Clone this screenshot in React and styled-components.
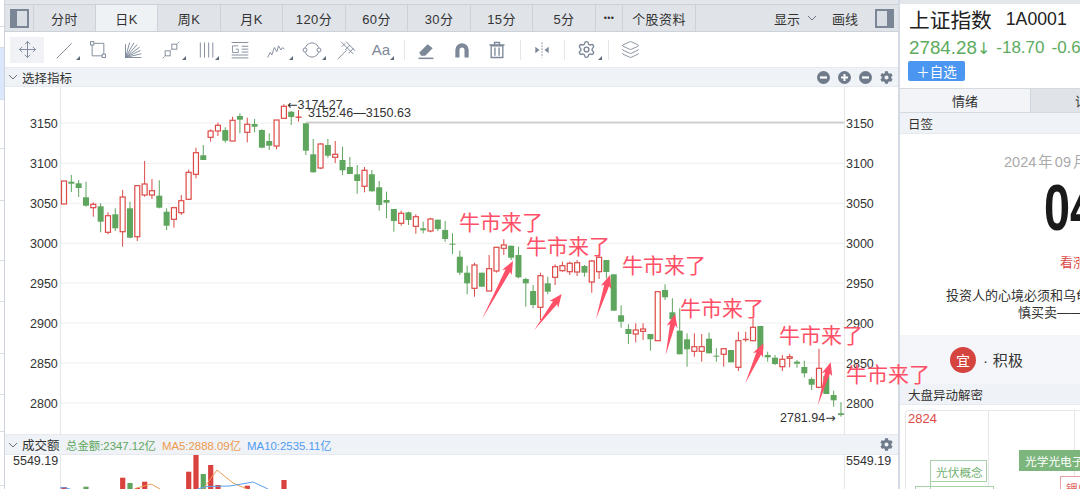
import React from 'react';
import styled, { createGlobalStyle } from 'styled-components';
import { Move, Layers, Settings } from 'lucide-react';
import { FaCog } from 'react-icons/fa';

const FONT = `"Liberation Sans", "Noto Sans CJK SC", sans-serif`;
const GREEN = '#5ea55e';
const RED = '#db4a46';
const ICON = '#7c8798';

const Global = createGlobalStyle`
  html, body { margin: 0; padding: 0; width: 1080px; height: 489px; overflow: hidden; background: #fff; }
  #root { width: 1080px; height: 489px; }
  * { box-sizing: border-box; }
`;

const Page = styled.div`
  display: flex; width: 1080px; height: 489px; overflow: hidden;
  font-family: ${FONT}; color: #333; background: #fff;
`;
const SideStrip = styled.div`
  width: 5px; flex: none; display: flex; flex-direction: column;
  border-right: 1px solid #ccd3dc;
`;
const SideRow = styled.div`
  height: ${p => p.$h}px; flex: none;
  background: ${p => p.$bg || '#fff'};
  border-bottom: 1px solid #d8dde3;
`;
const Main = styled.div`
  width: 893px; flex: none; display: flex; flex-direction: column;
  position: relative; z-index: 2;
`;
const TopGap = styled.div`height: 4px; flex: none; background: #e3e6ea;`;

const TabBar = styled.div`
  height: 28px; flex: none; display: flex; align-items: stretch;
  background: #e0e4e9; border-top: 1px solid #ccd2d9; border-bottom: 1px solid #ccd2d9;
`;
const PanelCell = styled.div`
  width: 28px; flex: none; display: flex; align-items: center; justify-content: center;
`;
const Tab = styled.div`
  width: ${p => p.$w}px; flex: none; display: flex; align-items: center; justify-content: center;
  font-size: ${p => p.$s || 13}px; letter-spacing: .4px; color: #333;
  background: ${p => (p.$active ? '#eff2f5' : 'transparent')};
  border-left: 1px solid #ccd2d9;
`;
const TabEnd = styled.div`
  flex: 1; display: flex; align-items: center; justify-content: flex-end;
  border-left: 1px solid #ccd2d9; padding-right: 4px; font-size: 13px; color: #333;
`;
const ShowLabel = styled.span`margin-right: 7px;`;
const DrawLabel = styled.span`margin: 0 17px 0 11px;`;
const Toggle = styled.div`
  width: 19px; height: 19px; border: 2px solid #7a8696; background: #d9dee4;
  display: flex; justify-content: ${p => (p.$right ? 'flex-end' : 'flex-start')};
`;
const ToggleFill = styled.div`width: 5px; background: #7a8696;`;

const Toolbar = styled.div`
  height: 35px; flex: none; display: flex; align-items: center; padding-left: 5px;
  background: #fff;
`;
const Tool = styled.div`
  width: ${p => p.$w}px; height: 26px; flex: none; position: relative;
  display: flex; align-items: center; justify-content: center;
  background: ${p => (p.$active ? '#f0f2f5' : 'transparent')};
`;
const Corner = styled.i`
  position: absolute; right: ${p => p.$r}px; bottom: 3px; width: 0; height: 0;
  border-left: 4px solid transparent; border-bottom: 4px solid #5f6b7b;
`;
const ToolSep = styled.div`
  width: 1px; height: 20px; flex: none; background: #e3e6ea; margin-left: ${p => p.$ml}px;
`;
const AaGlyph = styled.span`font-size: 15px; color: ${ICON};`;

const PaneHead = styled.div`
  height: ${p => p.$h}px; flex: none; display: flex; align-items: center;
  background: #eff2f6; border-top: 1px solid #e6e9ee; border-bottom: 1px solid #e6e9ee;
  padding: 0 5px 0 3px; font-size: 12.5px; color: #333;
`;
const Chevron = styled.svg`width: 10px; height: 10px; margin-right: 4px; flex: none;`;
const HeadTitle = styled.span`margin-right: 4px; width: 40px; flex: none;`;
const Metric = styled.span`font-size: 11.4px; color: ${p => p.$c}; margin-right: 6px; white-space: nowrap;`;
const HeadIcons = styled.div`
  margin-left: auto; display: flex; align-items: center; gap: 8px; padding-right: 0;
`;
const Round = styled.div`
  width: 13px; height: 13px; border-radius: 50%; background: #6f7b8b; color: #fff;
  display: flex; align-items: center; justify-content: center;
`;
const CogWrap = styled.div`display: flex; color: #6f7b8b; margin-right: 0;`;

const ChartBox = styled.div`height: ${p => p.$h}px; flex: none; position: relative;`;
const Svg = styled.svg`display: block; overflow: visible;`;
const AxisText = styled.text`font: 12.5px ${FONT}; fill: #333;`;
const Mark = styled.text`font: 12.5px ${FONT}; fill: #333;`;
const MarkArrow = styled.tspan`font-family: "DejaVu Sans", sans-serif;`;
const Anno = styled.text`
  font: 400 21px "Noto Sans CJK SC", sans-serif; fill: #ff5068;
`;

const Rule = styled.div`width: 2px; flex: none; background: #d3dae3;`;
const Right = styled.div`
  width: 180px; flex: none; display: flex; flex-direction: column; overflow: hidden;
  position: relative; z-index: 1;
`;
const InfoHead = styled.div`
  height: 88px; flex: none; padding: 1px 0 0 9px; background: #fff; border-top: 4px solid #e3e6ea;
  white-space: nowrap; overflow: hidden;
`;
const TitleRow = styled.div`display: flex; align-items: center; height: 32px; margin-top: -2px;`;
const Title = styled.span`font-size: 20.7px; color: #222; margin-right: 14px;`;
const Code = styled.span`font-size: 17.7px; color: #222;`;
const PriceRow = styled.div`display: flex; align-items: center; height: 22px; margin-top: 2px; color: #5cab5e;`;
const Price = styled.span`font-size: 18.8px;`;
const PriceArrow = styled.span`font: 16px "DejaVu Sans", sans-serif; margin-right: 6px;`;
const Change = styled.span`font-size: 17px; margin-right: 7px;`;
const AddBtn = styled.div`
  width: 57px; height: 20px; margin: 2px 0 0 -1px; border-radius: 2px; background: #4a96f0;
  color: #fff; font-size: 13.5px; display: flex; align-items: center; justify-content: center;
`;
const InfoTabs = styled.div`height: 25px; flex: none; display: flex;`;
const InfoTab = styled.div`
  width: ${p => p.$w}px; flex: none; font-size: 13px; color: #333;
  display: flex; align-items: center; padding-bottom: 1px;
  justify-content: ${p => (p.$clip ? 'flex-start' : 'center')};
  padding-left: ${p => (p.$clip ? 44 : 0)}px; overflow: hidden; white-space: nowrap;
  background: ${p => (p.$active ? '#f2f4f7' : '#e0e4e9')};
  border-top: 1px solid #d5dae0; border-bottom: 1px solid #d5dae0;
  border-right: ${p => (p.$active ? '1px solid #cfd5dc' : '0')};
`;
const SubHead = styled.div`
  height: ${p => p.$h}px; flex: none; background: #eff2f6; display: flex; align-items: center;
  padding-left: 8px; font-size: 12.5px; color: #333;
  border-bottom: 1px solid #e6e9ee;
`;
const Day = styled.div`height: 201px; flex: none; background: #fff; position: relative; white-space: nowrap;`;
const DayLine = styled.div`
  position: absolute; left: ${p => p.$x}px; top: ${p => p.$y}px;
  font-size: ${p => p.$s}px; line-height: 1; color: ${p => p.$c || '#333'};
`;
const DayDate = styled(DayLine)`word-spacing: -2px;`;
const DayNumber = styled(DayLine)`
  font-weight: 700; transform: scaleX(.72); transform-origin: left center;
`;
const LuckRow = styled.div`
  height: 49px; flex: none; background: #f4f6f9; display: flex; align-items: center; padding-left: 50px;
`;
const Stamp = styled.div`
  width: 26px; height: 26px; border-radius: 50%; background: #d6443f; color: #fff;
  display: flex; align-items: center; justify-content: center; font-size: 14px; margin-right: 7px;
`;
const Luck = styled.span`font-size: 15px; color: #333; letter-spacing: .3px;`;
const Map = styled.div`flex: 1; background: #fff; position: relative; padding: 5px 0 0 5px;`;
const MapFrame = styled.div`
  height: 90px; width: 200px; border: 1.5px solid #e8e8e8; border-radius: 3px;
  position: relative; display: flex;
`;
const MapCol = styled.div`width: ${p => p.$w}px; flex: none; border-right: 1px solid #e6e6e6;`;
const HighVal = styled.div`
  position: absolute; left: 2px; top: 1px; font-size: 13px; line-height: 14px; color: ${RED};
`;
const ConceptTag = styled.div`
  position: absolute; left: ${p => p.$x}px; top: ${p => p.$y}px; width: ${p => p.$w}px; height: ${p => p.$h}px;
  font-size: 11.7px; display: flex; align-items: center; padding-left: 5px; white-space: nowrap;
  color: ${p => (p.$fill ? '#fff' : p.$c)};
  background: ${p => (p.$fill ? '#7cb67c' : '#fff')};
  border: 1px solid ${p => (p.$fill ? '#7cb67c' : p.$b)};
`;
const TagLink = styled.div`
  position: absolute; left: 24px; top: 70px; width: 1px; height: 12px; background: #a8d0a8; z-index: 1;
`;

// type, wickTop, bodyTop, bodyBottom, wickBottom (page pixels)
const K = [
  ['r',181,181,204,204],['g',175,181.7,183.7,192],['g',180,183.3,188,197],['g',181.7,197.3,205.7,206.7],
  ['r',202.3,204.3,207.7,216.7],['g',203.3,206.3,221.7,232.3],['r',212.3,215.7,232.3,234.3],['g',208.3,214.3,228.3,231],
  ['r',190,197,231.7,246.7],['g',201.7,208.3,237.7,238.3],['r',185.7,185.7,236.7,241],['r',161,184,195,196.7],
  ['r',179,190.7,195,199],['g',180.3,195.7,207.7,208.3],['g',208.3,211.7,225.7,230],['r',206.7,207.7,219.3,227.7],
  ['r',195,200.7,212.7,215],['r',169.7,172.3,199.3,199.3],['r',147.7,152.7,174.3,178.3],['g',145,155.3,160,160],
  ['r',129.3,131,137.3,141.7],['r',122.7,125.3,131,136],['g',127.3,130,140.7,142.7],['r',116.7,120.3,141,141],
  ['g',113.3,116,119.7,133.3],['r',117.7,124.3,132.3,142.3],['g',119,124,126.7,132.3],['g',129.3,130,147.7,148.3],
  ['g',133.3,141,145.7,150],['r',120,120,146,149.3],['r',104.3,106.3,118.3,118.3],['g',111,111.7,117,125],
  ['x',110,116.7,117.7,121.7],['g',123.3,123.3,150.7,155],['g',139,154.3,172.3,172.7],['r',143.3,144,168,169],
  ['g',139,145,155.7,157.7],['r',141,154.3,157.3,163],['g',146.7,160,170.3,175],['g',157,167,174,174],
  ['g',165,174.3,181,193.7],['r',167,170.3,186.3,192.3],['g',170,174.3,191.3,191.7],['g',181,187.3,205,210.7],
  ['g',191.7,200,202.7,218.3],['g',209,209,221,231.7],['r',210.7,213.3,223.3,225.7],['g',211.7,212.3,220,225],
  ['r',214.3,216.7,226.3,233.7],['g',221.7,228.3,230.3,233.3],['r',217.7,219,231,232.3],['g',219.7,219.7,229,231],
  ['g',221,230,239,241.7],['g',233.3,243.7,244.3,254],['g',250.7,256.7,272.7,275],['g',265.7,272.7,283.3,294.3],
  ['r',262.7,265,288.3,296.7],['g',272.7,272.7,286.7,286.7],['r',255,268.7,291,291],['r',247,247.3,271,272.7],
  ['r',239.3,245,248.3,255],['g',245.7,245.7,257.7,260],['g',246.7,255,277.3,278.3],['g',277.7,279,283.3,306.7],
  ['g',285,291,305,308.3],['r',272.7,275.7,307.3,320],['g',276.7,283.3,291.7,294.3],['r',264.3,266.7,277.3,285],
  ['r',261.7,265.7,270.7,271.7],['r',261.7,263.3,271.7,275],['r',260,262.7,272,276],['g',265,266,272.7,276.7],
  ['r',260,261,282,292.7],['r',254,257.3,271.7,279],['g',260,260,272,278.3],['g',274.3,274.3,310.7,310.7],
  ['g',305.3,315.3,321.7,327.7],['g',324.3,329,334,344],['r',323.3,330,334,342.3],['r',323.3,329,331.3,340],
  ['g',334,334,339.3,350.7],['r',291.7,291.7,340.7,341],['g',284.3,290,297.3,300],['g',298.3,312.3,319.3,320],
  ['g',308.3,330.7,354.3,354.3],['g',333.3,339.3,349.3,366.7],['r',333.3,346.7,351.3,356.7],['r',334,346.7,351.3,361.7],
  ['g',332.7,338.7,353.3,353.3],['g',348.3,355.7,356.7,361.7],['r',348.3,348.7,354.3,366.7],['g',350,350,362.3,362.3],
  ['r',331.7,340.7,367.3,371],['x',331.7,339,340,341.7],['r',318.3,327.3,340.7,340.7],['g',326,326,349.3,350],
  ['g',351.7,355,357.3,361.7],['g',355,357.7,364,365],['r',355,359.3,366.7,371],['r',354,356.7,358.3,367.3],
  ['g',360,361.7,363.7,367.7],['g',360.7,367,373.3,377.3],['g',377.3,379,384.7,390],['r',348.7,368.3,387.3,388.3],
  ['g',376,376,394,394],['g',390.7,395,400.3,406.7],['g',402.3,413.3,415,416.7],
];
const kx = i => 64 + 7.33 * i;

const LEVELS = [[3150, 123], [3100, 163.3], [3050, 203.3], [3000, 243.3], [2950, 283], [2900, 323], [2850, 363], [2800, 403]];

const ANNOS = [[459, 230], [526, 254], [622, 273], [680, 316], [779, 343], [846, 382]];
const ARROWS = [
  [482, 319, 513, 261], [534.3, 330, 561.7, 294], [596, 319, 610, 275],
  [665.7, 355, 675, 314], [745.3, 383.3, 763.3, 343.3], [817.7, 405.7, 830.7, 362.3],
];
function arrowPoints([tx, ty, px, py]) {
  const L = Math.hypot(px - tx, py - ty);
  const dx = (px - tx) / L, dy = (py - ty) / L;
  const nx = -dy, ny = dx;
  const at = (back, side) => `${(px - dx * back + nx * side).toFixed(1)},${(py - dy * back + ny * side).toFixed(1)}`;
  return [`${tx},${ty}`, at(11, 2.6), at(13, 5.5), `${px},${py}`, at(13, -5.5), at(11, -2.6)].join(' ');
}

const VOL = [
  [64,487,'r'],[86,486.7,'g'],[122.7,477.7,'r'],[130,483,'g'],[137.3,488,'r'],[144.7,481.7,'r'],
  [188.7,471.7,'r'],[196,455,'r'],[203.3,474,'g'],[210.7,465,'r'],[218,485,'r'],[247.3,485.7,'r'],[284,480,'r'],
];

function Candle({ d, i }) {
  const [t, wt, bt, bb, wb] = d;
  const x = kx(i);
  const c = t === 'g' ? GREEN : RED;
  if (t === 'x') {
    return (
      <g stroke={c} strokeWidth="1">
        <line x1={x} x2={x} y1={wt} y2={wb} />
        <line x1={x - 3} x2={x + 3} y1={bt + .5} y2={bt + .5} strokeWidth="1.4" />
      </g>
    );
  }
  if (t === 'g') {
    return (
      <g>
        <line x1={x} x2={x} y1={wt} y2={wb} stroke={c} strokeWidth="1" />
        <rect x={x - 3} y={bt} width="6" height={Math.max(bb - bt, 1)} fill={c} />
      </g>
    );
  }
  return (
    <g stroke={c}>
      <line x1={x} x2={x} y1={wt} y2={bt} strokeWidth="1" />
      <line x1={x} x2={x} y1={bb} y2={wb} strokeWidth="1" />
      <rect x={x - 2.5} y={bt} width="5" height={bb - bt} fill="#fff" strokeWidth="1.2" />
    </g>
  );
}

const Ic = ({ children, w = 20 }) => (
  <svg width={w} height={w} viewBox="0 0 24 24" fill="none" stroke={ICON} strokeWidth="1.1">{children}</svg>
);

const TOOLS = [
  { w: 34, active: true, n: <Move size={19} color={ICON} strokeWidth={1.2} /> },
  { w: 42, c: 6, n: <Ic><path d="M2 22L20 4" /></Ic> },
  { w: 24, n: <Ic><path d="M5 4H19V19H5Z" /><rect x="3" y="2" width="4" height="4" fill="#fff" /><rect x="17" y="17" width="4" height="4" fill="#fff" /></Ic> },
  { w: 46, n: <Ic><path d="M3 21H22M3 21L22 16.5M3 21L21 12.5M3 21L20 8.5M3 21L17 5.5M3 21L13 3.5M3 21L8 3M3 21V5" /></Ic> },
  { w: 30, c: 0, n: <Ic><path d="M2 22L22 2" strokeDasharray="3 2" /><rect x="5" y="13" width="6" height="6" fill="#fff" /><rect x="13" y="5" width="6" height="6" fill="#fff" /></Ic> },
  { w: 42, c: 9, n: <Ic><path d="M4 3V21M9 3V21M14 3V21M19 3V21" /></Ic> },
  { w: 24, n: <Ic><path d="M2 3H22M14 7.5H22M14 11H22M14 14.5H22M2 18H22M2 21.5H22" /><path d="M10 7H3V15H10V11H7" strokeWidth="1" /></Ic> },
  { w: 48, c: 7, n: <Ic><path d="M2 21L5 15L7 18L10 9L13 14L15 7L18 12L20 9L22 11" /></Ic> },
  { w: 24, c: -2, n: <Ic><circle cx="12" cy="12" r="8.5" /><circle cx="3.6" cy="12" r="2.4" fill="#fff" /><circle cx="20.4" cy="12" r="2.4" fill="#fff" /></Ic> },
  { w: 44, n: <Ic><path d="M2 23L13 12M6 2L21 17M12 2L23 13M7 8L11 4M11 12L17 6M15 16L21 10" /></Ic> },
  { w: 26, c: 0, n: <AaGlyph>Aa</AaGlyph> },
];
const TOOLS2 = [
  { w: 42, n: <Ic><path d="M4 15L14 5L20 10L11 19H6Z" fill={ICON} stroke="none" /><path d="M3 22H21" strokeWidth="1.8" /></Ic> },
  { w: 30, n: <Ic><path d="M4 21V12A8 8 0 0 1 20 12V21H15V12A3 3 0 0 0 9 12V21Z" fill={ICON} stroke="none" /></Ic> },
  { w: 40, n: <Ic><path d="M3 6H21M9 6V3H15V6M5 7H19V21H5ZM9.5 9V19M14.5 9V19" strokeWidth="1.6" /></Ic> },
];

function Minus() { return <svg width="9" height="9" viewBox="0 0 9 9"><rect x="1" y="3.4" width="7" height="2.2" fill="#fff" /></svg>; }
function Plus() { return <svg width="9" height="9" viewBox="0 0 9 9"><path d="M1 3.5H3.5V1H5.5V3.5H8V5.5H5.5V8H3.5V5.5H1Z" fill="#fff" /></svg>; }
const Chev = () => <Chevron viewBox="0 0 10 10"><path d="M1 3L5 7L9 3" fill="none" stroke="#67717f" strokeWidth="1" /></Chevron>;

const SIDE = [[27], [21], [52, '#dbe7fb'], [49], [52], [60], [41], [52], [41], [37], [54]];

export default function App() {
  return (
    <Page>
      <Global />
      <SideStrip>
        {SIDE.map(([h, bg], i) => <SideRow key={i} $h={h} $bg={bg} />)}
      </SideStrip>
      <Main>
        <TopGap />
        <TabBar>
          <PanelCell><Toggle><ToggleFill /></Toggle></PanelCell>
          {[['分时', 62], ['日K', 62, true], ['周K', 63], ['月K', 62], ['120分', 63], ['60分', 62], ['30分', 63], ['15分', 62], ['5分', 63], ['•••', 27, false, 9], ['个股资料', 73]].map(([t, w, a, s]) => (
            <Tab key={t} $w={w} $active={a} $s={s}>{t}</Tab>
          ))}
          <TabEnd>
            <ShowLabel>显示</ShowLabel>
            <Chev />
            <DrawLabel>画线</DrawLabel>
            <Toggle $right><ToggleFill /></Toggle>
          </TabEnd>
        </TabBar>
        <Toolbar>
          {TOOLS.map((t, i) => (
            <Tool key={i} $w={t.w} $active={t.active}>{t.n}{t.c !== undefined && <Corner $r={t.c} />}</Tool>
          ))}
          <ToolSep $ml={10} />
          {TOOLS2.map((t, i) => <Tool key={i} $w={t.w}>{t.n}</Tool>)}
          <ToolSep $ml={3} />
          <Tool $w={42}>
            <Ic><path d="M12 3V21" strokeDasharray="2 1.5" /><path d="M9 12L4 8V16Z M15 12L20 8V16Z" fill={ICON} stroke="none" /></Ic>
          </Tool>
          <ToolSep $ml={1} />
          <Tool $w={42}><Settings size={19} color={ICON} strokeWidth={1.8} /><Corner $r={5} /></Tool>
          <ToolSep $ml={1} />
          <Tool $w={42}><Layers size={19} color={ICON} strokeWidth={1.1} /></Tool>
        </Toolbar>
        <PaneHead $h={20}>
          <Chev />
          <span>选择指标</span>
          <HeadIcons>
            <Round><Minus /></Round>
            <Round><Plus /></Round>
            <Round><Minus /></Round>
            <CogWrap><FaCog size={13} /></CogWrap>
          </HeadIcons>
        </PaneHead>
        <ChartBox $h={347}>
          <Svg width="893" height="347" viewBox="5 87 893 347">
            <line x1="60.5" x2="60.5" y1="87" y2="434" stroke="#e6e6e6" />
            <line x1="844.5" x2="844.5" y1="87" y2="434" stroke="#e6e6e6" />
            {LEVELS.map(([v, y]) => <line key={v} x1="61" x2="844" y1={y} y2={y} stroke="#eeeeee" />)}
            <line x1="306" x2="844" y1="122.5" y2="122.5" stroke="#d0d0d0" strokeWidth="2" />
            {LEVELS.map(([v, y]) => (
              <g key={v}>
                <AxisText x="30" y={y + 4.5}>{v}</AxisText>
                <AxisText x="846" y={y + 4.5}>{v}</AxisText>
              </g>
            ))}
            {K.map((d, i) => <Candle key={i} d={d} i={i} />)}
            <Mark x="287" y="109"><MarkArrow>←</MarkArrow>3174.27</Mark>
            <Mark x="308" y="117">3152.46—3150.63</Mark>
            <Mark x="780" y="422">2781.94<MarkArrow>→</MarkArrow></Mark>
            {ARROWS.map((a, i) => <polygon key={i} points={arrowPoints(a)} fill="#ff5068" />)}
            {ANNOS.map(([x, y], i) => <Anno key={i} x={x} y={y}>牛市来了</Anno>)}
          </Svg>
        </ChartBox>
        <PaneHead $h={21}>
          <Chev />
          <HeadTitle>成交额</HeadTitle>
          <Metric $c="#5fa75f">总金额:2347.12亿</Metric>
          <Metric $c="#ee9a4d">MA5:2888.09亿</Metric>
          <Metric $c="#4f9bf2">MA10:2535.11亿</Metric>
          <HeadIcons><CogWrap><FaCog size={13} /></CogWrap></HeadIcons>
        </PaneHead>
        <ChartBox $h={34}>
          <Svg width="893" height="34" viewBox="5 455 893 34">
            <line x1="60.5" x2="60.5" y1="455" y2="489" stroke="#e6e6e6" />
            <line x1="844.5" x2="844.5" y1="455" y2="489" stroke="#e6e6e6" />
            {VOL.map(([x, y, t], i) => (
              <rect key={i} x={x - 2.6} y={y} width="5.2" height={489 - y} fill={t === 'g' ? GREEN : '#d9423e'} />
            ))}
            <polyline points="60,488 64,487.5 70,489" fill="none" stroke="#5aa0f2" strokeWidth="1" />
            <polyline points="135,488.5 151,484 160,489" fill="none" stroke="#ee9f55" strokeWidth="1" />
            <polyline points="203,489 217,470 233,483 247,489" fill="none" stroke="#ee9f55" strokeWidth="1" />
            <polyline points="197,489 207,486.5 230,486 253,482 268,489" fill="none" stroke="#5aa0f2" strokeWidth="1" />
            <AxisText x="13" y="465">5549.19</AxisText>
            <AxisText x="846" y="465">5549.19</AxisText>
          </Svg>
        </ChartBox>
      </Main>
      <Rule />
      <Right>
        <InfoHead>
          <TitleRow><Title>上证指数</Title><Code>1A0001</Code></TitleRow>
          <PriceRow><Price>2784.28</Price><PriceArrow>↓</PriceArrow><Change>-18.70</Change><Change>-0.67%</Change></PriceRow>
          <AddBtn>＋自选</AddBtn>
        </InfoHead>
        <InfoTabs>
          <InfoTab $w={131} $active>情绪</InfoTab>
          <InfoTab $w={49} $clip>详情</InfoTab>
        </InfoTabs>
        <SubHead $h={21}>日签</SubHead>
        <Day>
          <DayDate $x={104} $y={21} $s={14.5} $c="#aaa">2024 年 09 月</DayDate>
          <DayNumber $x={144} $y={41} $s={65} $c="#1a1a1a">04</DayNumber>
          <DayLine $x={160} $y={122} $s={13} $c={RED}>看涨</DayLine>
          <DayLine $x={46} $y={155} $s={13}>投资人的心境必须和乌龟</DayLine>
          <DayLine $x={118} $y={172} $s={13}>慎买卖——</DayLine>
        </Day>
        <LuckRow><Stamp>宜</Stamp><Luck>· 积极</Luck></LuckRow>
        <SubHead $h={21}>大盘异动解密</SubHead>
        <Map>
          <MapFrame>
            <HighVal>2824</HighVal>
            <MapCol $w={83} />
            <MapCol $w={86} />
            <TagLink />
            <ConceptTag $x={113} $y={39} $w={90} $h={21} $fill>光学光电子</ConceptTag>
            <ConceptTag $x={24} $y={49} $w={57} $h={22} $c="#72b172" $b="#a8d0a8">光伏概念</ConceptTag>
            <ConceptTag $x={9} $y={75} $w={79} $h={22} $c="#72b172" $b="#a8d0a8"> </ConceptTag>
            <ConceptTag $x={154} $y={65} $w={50} $h={22} $c="#e06a66" $b="#e9a0a0">锂电</ConceptTag>
          </MapFrame>
        </Map>
      </Right>
    </Page>
  );
}
